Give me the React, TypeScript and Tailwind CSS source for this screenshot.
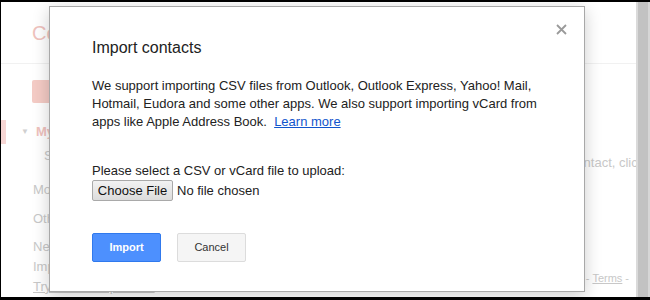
export default function App() {
  return (
    <div
      className="w-[650px] h-[300px] bg-black pt-[2px] pb-[3px] pl-px flex overflow-hidden"
      style={{ fontFamily: '"Liberation Sans", Arial, sans-serif' }}
    >
      {/* Faded contacts page behind the dialog */}
      <div className="relative flex-1 min-w-0 bg-white overflow-hidden flex flex-col">
        <div className="h-[62px] shrink-0 border-b border-[#f1f1f1] flex items-center pl-[31px]">
          <span className="text-[20px] text-[#efc2bd]">Contacts</span>
        </div>

        <div className="flex flex-1 min-h-0">
          {/* Sidebar */}
          <div className="w-[180px] shrink-0 flex flex-col text-[13px] text-[#c8c8c8] whitespace-nowrap">
            <div className="mt-[16px] ml-[31px] w-[72px] h-[24px] rounded-[2px] bg-[#f4cbc5] flex items-center justify-center text-[11px] font-bold text-white">
              NEW
            </div>
            <div className="mt-[17px] h-[26px] border-l-[5px] border-[#f6d6d4] flex items-center">
              <span className="ml-[15px] mr-[7px] text-[8px] text-[#d0d0d0]">▼</span>
              <span className="font-bold text-[#efc2bd]">My Contacts</span>
            </div>
            <div className="h-[24px] flex items-center pl-[43px]">Starred</div>
            <div className="mt-[12px] h-[24px] flex items-center pl-[32px]">Most Contacted</div>
            <div className="mt-[6px] h-[24px] flex items-center pl-[32px]">Other Contacts</div>
            <div className="mt-[6px] h-[22px] flex items-center pl-[32px]">New Group...</div>
            <div className="h-[20px] flex items-center pl-[32px]">Import Contacts...</div>
            <div className="h-[22px] flex items-center pl-[32px] underline">Try Contacts preview</div>
          </div>

          {/* Main area */}
          <div className="flex-1 min-w-0 overflow-hidden flex flex-col text-[13px] text-[#c8c8c8] whitespace-nowrap">
            <div className="mt-[89px] pl-[378px]">a contact, click</div>
            <div className="mt-auto mb-[11px] flex justify-end pr-[7px] gap-[3px] text-[11px]">
              <span>-</span>
              <span className="underline">Terms</span>
              <span>-</span>
            </div>
          </div>
        </div>

        {/* Import dialog */}
        <div className="absolute left-[48px] top-[4px] w-[536px] h-[286px] bg-white border border-[#a8a8a8] shadow-[0_4px_16px_rgba(0,0,0,0.2)] pl-[42px] pt-[31px]">
          <button className="absolute right-[17px] top-[16px] w-[12px] h-[12px] flex items-center justify-center">
            <svg width="11" height="11" viewBox="0 0 11 11">
              <path d="M1 1 L10 10 M10 1 L1 10" stroke="#9a9a9a" strokeWidth="1.8" />
            </svg>
          </button>

          <h2 className="text-[16px] leading-[20px] text-[#222]">Import contacts</h2>

          <p className="mt-[19px] text-[13px] leading-[18px] text-[#222] whitespace-nowrap">
            We support importing CSV files from Outlook, Outlook Express, Yahoo! Mail,
            <br />
            Hotmail, Eudora and some other apps. We also support importing vCard from
            <br />
            apps like Apple Address Book.&nbsp;{' '}
            <a className="text-[#15c] underline">Learn more</a>
          </p>

          <p className="mt-[31px] text-[13px] leading-[18px] text-[#222]">
            Please select a CSV or vCard file to upload:
          </p>
          <div className="flex items-center gap-[4px] whitespace-nowrap">
            <div className="w-[81px] h-[21px] shrink-0 border border-[#a9a9a9] rounded-[2px] bg-gradient-to-b from-[#f2f2f2] to-[#dcdcdc] flex items-center justify-center text-[13px] text-[#111]">
              Choose File
            </div>
            <span className="text-[13px] text-[#222]">No file chosen</span>
          </div>

          <div className="mt-[32px] flex gap-[16px]">
            <div className="w-[69px] h-[29px] rounded-[2px] bg-[#4d90fe] border border-[#3079ed] flex items-center justify-center text-[11px] font-bold text-white">
              Import
            </div>
            <div className="w-[69px] h-[29px] rounded-[2px] bg-[#f5f5f5] border border-[#dcdcdc] flex items-center justify-center text-[11px] text-[#333]">
              Cancel
            </div>
          </div>
        </div>
      </div>

      {/* Scrollbar */}
      <div className="w-[14px] shrink-0 flex bg-[#c2c2c2]">
        <div className="w-[2px] bg-[#dadada]" />
        <div className="flex-1" />
        <div className="w-[2px] bg-[#d6d6d6]" />
      </div>
    </div>
  );
}
